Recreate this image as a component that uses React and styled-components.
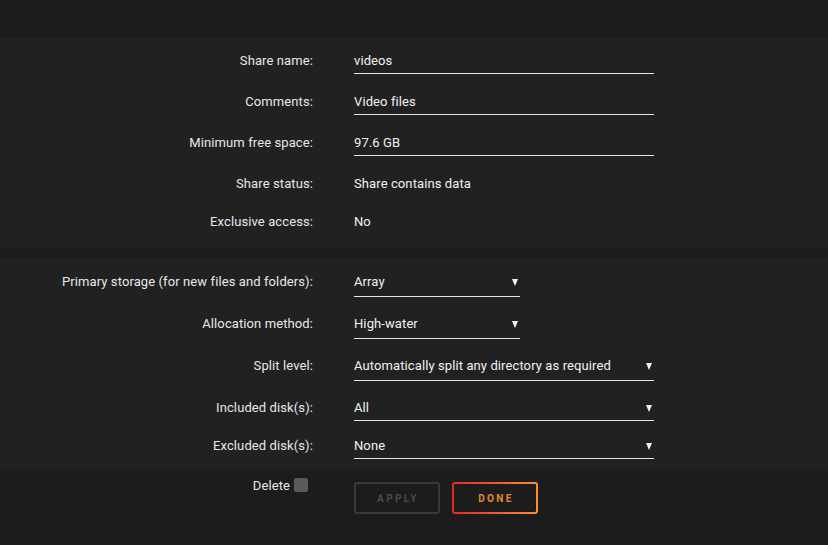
import React from "react";
import styled, { createGlobalStyle } from "styled-components";

const Global = createGlobalStyle`
  html, body { margin: 0; padding: 0; background: #1c1c1c; }
  body { font-family: "Roboto", "Liberation Sans", sans-serif; font-size: 13px; letter-spacing: 0.1px; color: #f2f2f2; }
`;

const Page = styled.div`
  width: 828px;
  height: 545px;
  padding-top: 38px;
  box-sizing: border-box;
  background: #1c1c1c;
`;

const Section = styled.section`
  background: #212121;
  padding: ${(p) => p.$pad};
  margin-bottom: ${(p) => p.$mb || 0}px;
`;

const Row = styled.div`
  display: grid;
  grid-template-columns: 313px 300px;
  column-gap: 41px;
  align-items: start;
  height: ${(p) => p.$h}px;
`;

const Label = styled.div`
  text-align: right;
  line-height: 24px;
  color: #e8e8e8;
  display: flex;
  justify-content: flex-end;
  align-items: center;
  gap: 4px;
`;

const Value = styled.div`
  line-height: 24px;
`;

const Input = styled.div`
  width: 300px;
  line-height: 24px;
  border-bottom: 1px solid #e6e6e6;
`;

const Select = styled.div`
  position: relative;
  width: ${(p) => p.$w}px;
  line-height: 24px;
  padding-bottom: ${(p) => p.$pb}px;
  border-bottom: 1px solid #e6e6e6;
`;

const Arrow = styled.span`
  position: absolute;
  right: 2px;
  top: 9px;
  width: 0;
  height: 0;
  border-left: 3.5px solid transparent;
  border-right: 3.5px solid transparent;
  border-top: 7px solid #f2f2f2;
`;

const Footer = styled.div`
  display: grid;
  grid-template-columns: 308px auto;
  column-gap: 46px;
  align-items: start;
  padding-top: 3px;
`;

const Checkbox = styled.span`
  display: inline-block;
  width: 14px;
  height: 14px;
  background: #5a5a5a;
  border-radius: 2px;
  margin-top: -3px;
`;

const Buttons = styled.div`
  display: flex;
  gap: 12px;
  margin-top: 8px;
`;

const Button = styled.button`
  width: 86px;
  height: 32px;
  box-sizing: border-box;
  border-radius: 3px;
  font-family: "Roboto", "Liberation Sans", sans-serif;
  font-weight: 700;
  font-size: 10px;
  letter-spacing: 2.4px;
  text-indent: 2px;
  cursor: pointer;
  ${(p) =>
    p.$primary
      ? `
    border: 2px solid transparent;
    background: linear-gradient(#1c1c1c, #1c1c1c) padding-box,
      linear-gradient(90deg, #e22828, #ff8c2f) border-box;
    color: #e9892b;
  `
      : `
    border: 2px solid #3a3a3a;
    background: #1c1c1c;
    color: #4a4a4a;
  `}
`;

export default function App() {
  return (
    <Page>
      <Global />
      <Section $pad="11px 0 0" $mb={10}>
        <Row $h={41}>
          <Label>Share name:</Label>
          <Input>videos</Input>
        </Row>
        <Row $h={41}>
          <Label>Comments:</Label>
          <Input>Video files</Input>
        </Row>
        <Row $h={41}>
          <Label>Minimum free space:</Label>
          <Input>97.6 GB</Input>
        </Row>
        <Row $h={38}>
          <Label>Share status:</Label>
          <Value>Share contains data</Value>
        </Row>
        <Row $h={38}>
          <Label>Exclusive access:</Label>
          <Value>No</Value>
        </Row>
      </Section>
      <Section $pad="12px 0 0">
        <Row $h={42}>
          <Label>Primary storage (for new files and folders):</Label>
          <Select $w={166} $pb={2}>
            Array
            <Arrow />
          </Select>
        </Row>
        <Row $h={42}>
          <Label>Allocation method:</Label>
          <Select $w={166} $pb={2}>
            High-water
            <Arrow />
          </Select>
        </Row>
        <Row $h={42}>
          <Label>Split level:</Label>
          <Select $w={300} $pb={2}>
            Automatically split any directory as required
            <Arrow />
          </Select>
        </Row>
        <Row $h={38}>
          <Label>Included disk(s):</Label>
          <Select $w={300} $pb={0}>
            All
            <Arrow />
          </Select>
        </Row>
        <Row $h={37}>
          <Label>Excluded disk(s):</Label>
          <Select $w={300} $pb={0}>
            None
            <Arrow />
          </Select>
        </Row>
      </Section>
      <Footer>
        <Label>
          Delete <Checkbox />
        </Label>
        <Buttons>
          <Button>APPLY</Button>
          <Button $primary>DONE</Button>
        </Buttons>
      </Footer>
    </Page>
  );
}
